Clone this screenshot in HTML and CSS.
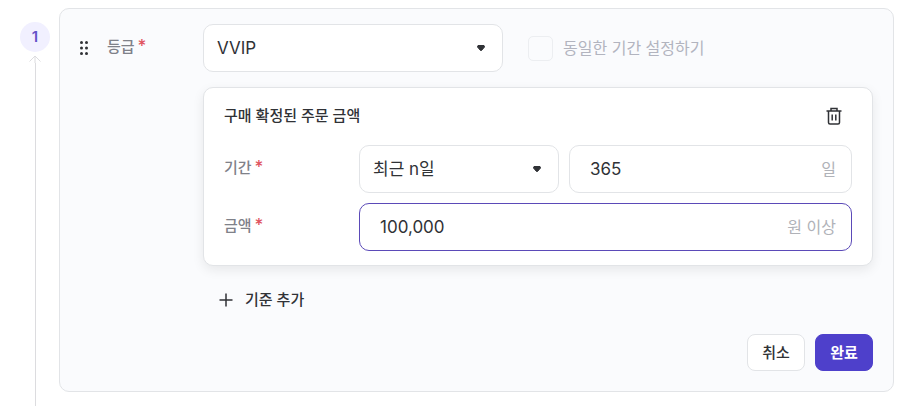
FILE: index.html
```html
<!doctype html>
<html lang="ko">
  <head>
    <meta charset="utf-8">
    <meta name="viewport" content="width=device-width, initial-scale=1.0">
    <title>등급 설정</title>
    <link rel="stylesheet" href="styles.css">
  </head>
  <body>
    <main class="level">
      <div class="rail">
        <span class="rail-number">1</span>
        <svg class="rail-arrow" width="12" height="8" viewBox="0 0 12 8" aria-hidden="true">
          <path d="M.5 6.500 6 1l5.500 5.500M6 1v7" />
        </svg>
        <span class="rail-line"></span>
      </div>
      <form class="card">
        <div class="card-head">
          <svg class="handle" width="8" height="14" viewBox="0 0 8 14" aria-hidden="true">
            <circle cx="1.500" cy="1.500" r="1.500" /><circle cx="6.500" cy="1.500" r="1.500" />
            <circle cx="1.500" cy="7" r="1.500" /><circle cx="6.500" cy="7" r="1.500" />
            <circle cx="1.500" cy="12.500" r="1.500" /><circle cx="6.500" cy="12.500" r="1.500" />
          </svg>
          <label class="label label-grade" for="grade">등급<span class="required">*</span></label>
          <div class="select select-grade">
            <select id="grade">
              <option>VVIP</option>
            </select>
            <svg class="caret" width="8" height="6" viewBox="0 0 8 6" aria-hidden="true"><path d="M1 .5h6L7.500 2 4.500 5.500h-1L.5 2z" /></svg>
          </div>
          <label class="same-period">
            <input type="checkbox" disabled>
            동일한 기간 설정하기
          </label>
        </div>
        <div class="card-body">
          <section class="rule">
            <header class="rule-head">
              <h2>구매 확정된 주문 금액</h2>
              <button class="delete" type="button" aria-label="삭제">
                <svg width="16" height="18" viewBox="0 0 16 18" aria-hidden="true">
                  <path d="M.5 4h15M5 4V1.500h6V4M2.500 4v11.500q0 1.500 1.500 1.500h8q1.500 0 1.500-1.500V4M6.200 7.500v6M9.800 7.500v6" />
                </svg>
              </button>
            </header>
            <div class="row">
              <label class="label label-rule" for="period">기간<span class="required">*</span></label>
              <div class="select select-period">
                <select id="period">
                  <option>최근 n일</option>
                </select>
                <svg class="caret" width="8" height="6" viewBox="0 0 8 6" aria-hidden="true"><path d="M1 .5h6L7.500 2 4.500 5.500h-1L.5 2z" /></svg>
              </div>
              <div class="field">
                <input type="text" id="days" value="365" aria-label="일수">
                <label class="unit" for="days">일</label>
              </div>
            </div>
            <div class="row">
              <label class="label label-rule" for="amount">금액<span class="required">*</span></label>
              <div class="field active">
                <input type="text" id="amount" value="100,000">
                <span class="unit">원 이상</span>
              </div>
            </div>
          </section>
          <button class="add" type="button">
            <svg width="14" height="14" viewBox="0 0 14 14" aria-hidden="true"><path d="M7 .5v13M.5 7h13" /></svg>
            기준 추가
          </button>
        </div>
        <footer class="actions">
          <button class="button" type="button">취소</button>
          <button class="button primary" type="submit">완료</button>
        </footer>
      </form>
    </main>
  </body>
</html>
```
FILE: styles.css
```css
* {
  box-sizing: border-box;
}
body {
  background: white;
  color: #303236;
  font: 15px/24px Inter, "Noto Sans CJK KR", sans-serif;
  margin: 0;
}
input, select, button {
  background: none;
  border: none;
  color: inherit;
  font: inherit;
  margin: 0;
  outline: none;
  padding: 0;
}
select, button {
  cursor: pointer;
}
svg {
  fill: none;
  flex: none;
  stroke: currentColor;
}
.level {
  display: flex;
  gap: 9px;
  min-height: 100vh;
  padding: 0 20px;
}
.rail {
  align-items: center;
  display: flex;
  flex: none;
  flex-direction: column;
  padding-top: 22px;
  width: 30px;
}
.rail-number {
  background: #f1f0ff;
  border-radius: 50%;
  color: #6554c8;
  font-size: 15px;
  font-weight: 600;
  height: 30px;
  line-height: 30px;
  text-align: center;
  width: 30px;
}
.rail-arrow {
  color: #dcdcdf;
  margin-top: 3px;
}
.rail-line {
  background: #dcdcdf;
  flex: 1;
  width: 1px;
}
.card {
  align-self: flex-start;
  background: #fafbfd;
  border: 1px solid #e2e4e7;
  border-radius: 10px;
  flex: 1;
  margin: 8px 0 14px;
  min-width: 0;
  padding: 15px 20px 20px;
}
.card-head {
  align-items: center;
  display: flex;
}
.handle {
  fill: #303236;
  margin-right: 19px;
  stroke: none;
}
.label {
  align-self: flex-start;
  color: #7f8189;
  flex: none;
  font-weight: 500;
  line-height: 44px;
}
.label-grade {
  width: 96px;
}
.label-rule {
  width: 135px;
}
.required {
  color: #e05260;
  font-size: 17px;
  margin-left: 3px;
}
.select {
  align-items: center;
  display: grid;
  flex: none;
}
  .select select {
    appearance: none;
    background: white;
    border: 1px solid #e2e4e7;
    border-radius: 10px;
    font-size: 17px;
    grid-area: 1 / 1;
    height: 48px;
    padding: 0 40px 0 13px;
    width: 100%;
  }
.select-grade {
  width: 300px;
}
.select-period {
  width: 200px;
}
.caret {
  fill: #303236;
  grid-area: 1 / 1;
  justify-self: end;
  margin-right: 18px;
  pointer-events: none;
}
.same-period {
  align-items: center;
  color: #b2b4bf;
  display: flex;
  font-size: 16px;
  gap: 10px;
  margin-left: 25px;
}
  .same-period input {
    appearance: none;
    border: 1px solid #eceef1;
    border-radius: 5px;
    height: 25px;
    width: 25px;
  }
.card-body {
  margin: 15px 0 0 123px;
}
.rule {
  background: white;
  border: 1px solid #e2e4e7;
  border-radius: 10px;
  box-shadow: 0 4px 12px rgba(0, 0, 0, 0.08);
  display: flex;
  flex-direction: column;
  gap: 10px;
  padding: 9px 20px 14px;
}
.rule-head {
  align-items: center;
  display: flex;
  justify-content: space-between;
  height: 38px;
}
  .rule-head h2 {
    font-size: 15px;
    font-weight: 500;
    line-height: 24px;
    margin: 0;
  }
.delete {
  display: flex;
  padding: 10px;
}
  .delete svg {
    stroke-width: 1.5;
  }
.row {
  display: flex;
}
.field {
  align-items: center;
  background: white;
  border: 1px solid #e2e4e7;
  border-radius: 10px;
  display: flex;
  flex: 1;
  font-size: 17px;
  height: 48px;
  min-width: 0;
  padding: 0 15px 0 20px;
}
  .select + .field {
    margin-left: 10px;
  }
  .field.active {
    border-color: #5b4ab8;
  }
  .field input {
    flex: 1;
    min-width: 0;
  }
.unit {
  color: #b0b2b8;
  flex: none;
  font-size: 16px;
}
.add {
  align-items: center;
  display: flex;
  font-weight: 500;
  gap: 12px;
  margin-top: 10px;
  padding: 12px 16px;
}
  .add svg {
    stroke-width: 1.5;
  }
.actions {
  display: flex;
  gap: 10px;
  justify-content: flex-end;
  margin-top: 10px;
}
.button {
  background: white;
  border: 1px solid #e2e4e7;
  border-radius: 8px;
  font-weight: 500;
  height: 37px;
  width: 58px;
}
  .button.primary {
    background: #4e40cb;
    border-color: #4e40cb;
    color: white;
    font-weight: 700;
  }
```
